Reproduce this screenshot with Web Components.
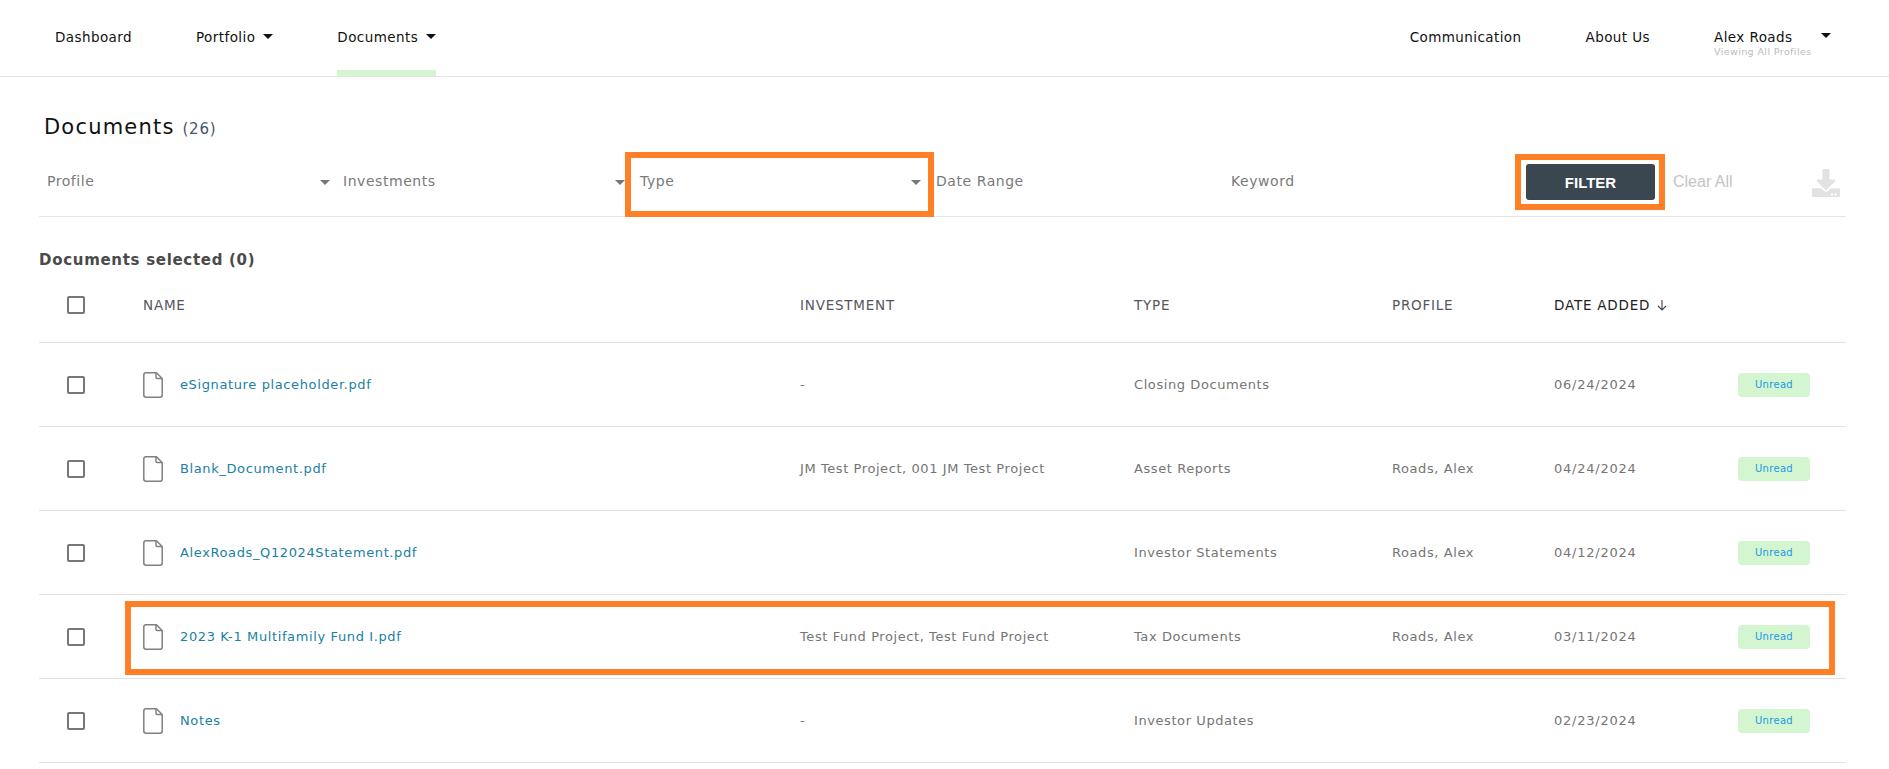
<!DOCTYPE html>
<html lang="en">
<head>
<meta charset="utf-8">
<title>Documents</title>
<style>
  html, body { margin: 0; background: #fff; }
  body { font-family: "DejaVu Sans", Verdana, sans-serif; position: relative; height: 769px; overflow: hidden; }
  main { display: block; padding: 0 43px 0 39px; }
</style>
</head>
<body>
<app-nav>
  <nav-item slot="left" style="margin-right:64px">Dashboard</nav-item>
  <nav-item slot="left" caret style="margin-right:64px">Portfolio</nav-item>
  <nav-item slot="left" caret active>Documents</nav-item>
  <nav-item slot="right" style="margin-right:64px">Communication</nav-item>
  <nav-item slot="right" style="margin-right:64px">About Us</nav-item>
  <user-menu slot="right"></user-menu>
</app-nav>
<main>
  <page-title count="(26)">Documents</page-title>
  <doc-filters>
    <filter-field style="width:296px" caret>Profile</filter-field>
    <filter-field style="width:297px;padding-right:15px" caret>Investments</filter-field>
    <filter-field style="width:296px;padding-right:15px" caret>Type</filter-field>
    <filter-field style="width:295px">Date Range</filter-field>
    <filter-field style="width:295px">Keyword</filter-field>
  </doc-filters>
  <selected-label>Documents selected (0)</selected-label>
  <doc-head></doc-head>
  <doc-row>
    <span slot="name">eSignature placeholder.pdf</span>
    <span slot="investment">-</span>
    <span slot="type">Closing Documents</span>
    <span slot="date">06/24/2024</span>
  </doc-row>
  <doc-row>
    <span slot="name">Blank_Document.pdf</span>
    <span slot="investment">JM Test Project, 001 JM Test Project</span>
    <span slot="type">Asset Reports</span>
    <span slot="profile">Roads, Alex</span>
    <span slot="date">04/24/2024</span>
  </doc-row>
  <doc-row>
    <span slot="name">AlexRoads_Q12024Statement.pdf</span>
    <span slot="type">Investor Statements</span>
    <span slot="profile">Roads, Alex</span>
    <span slot="date">04/12/2024</span>
  </doc-row>
  <doc-row>
    <span slot="name">2023 K-1 Multifamily Fund I.pdf</span>
    <span slot="investment">Test Fund Project, Test Fund Project</span>
    <span slot="type">Tax Documents</span>
    <span slot="profile">Roads, Alex</span>
    <span slot="date">03/11/2024</span>
  </doc-row>
  <doc-row>
    <span slot="name">Notes</span>
    <span slot="investment">-</span>
    <span slot="type">Investor Updates</span>
    <span slot="date">02/23/2024</span>
  </doc-row>
</main>
<!-- orange call-outs drawn over the page -->
<call-out style="left:625px;top:152px;width:309px;height:65px"></call-out>
<call-out style="left:1515px;top:154px;width:150px;height:56px"></call-out>
<call-out style="left:125px;top:601px;width:1710px;height:74px"></call-out>

<script>
const CARET = (color, w, h) => `<svg width="${w}" height="${h}" viewBox="0 0 10 5" style="display:block"><path d="M0 0h10L5 5z" fill="${color}"/></svg>`;

class AppNav extends HTMLElement {
    constructor() {
        super();
        this.attachShadow({ mode: 'open' });
    }

    connectedCallback() {
        this.shadowRoot.innerHTML = `
            <style>
                :host {
                    display: flex;
                    justify-content: space-between;
                    height: 77px;
                    box-sizing: border-box;
                    border-bottom: 1px solid #e4e4e4;
                    padding: 0 58px 0 55px;
                }
                .side { display: flex; align-items: stretch; }
            </style>
            <div class="side"><slot name="left"></slot></div>
            <div class="side"><slot name="right"></slot></div>
        `;
    }
}

class NavItem extends HTMLElement {
    constructor() {
        super();
        this.attachShadow({ mode: 'open' });
    }

    connectedCallback() {
        const caret = this.hasAttribute('caret') ? `<span class="caret">${CARET('#111', 10, 5)}</span>` : '';
        this.shadowRoot.innerHTML = `
            <style>
                :host {
                    display: flex;
                    align-items: flex-start;
                    box-sizing: border-box;
                    height: 76px;
                    padding-top: 29px;
                    font-size: 13.5px;
                    letter-spacing: .42px;
                    line-height: 17px;
                    color: #111;
                    white-space: nowrap;
                }
                :host([active]) { border-bottom: 6px solid #d3f5d0; }
                .caret { margin: 5px 0 0 8px; }
            </style>
            <slot></slot>${caret}
        `;
    }
}

class UserMenu extends HTMLElement {
    constructor() {
        super();
        this.attachShadow({ mode: 'open' });
    }

    connectedCallback() {
        this.shadowRoot.innerHTML = `
            <style>
                :host {
                    display: block;
                    width: 117px;
                    padding-top: 29px;
                    font-size: 13.5px;
                    letter-spacing: .42px;
                    line-height: 17px;
                    color: #111;
                    white-space: nowrap;
                }
                .top { display: flex; justify-content: space-between; }
                .caret { margin-top: 4px; }
                .sub { font-size: 9.500px; letter-spacing: .4px; line-height: 10px; color: #bbb; margin-top: 1px; }
            </style>
            <div class="top"><span>Alex Roads</span><span class="caret">${CARET('#111', 10, 5)}</span></div>
            <div class="sub">Viewing All Profiles</div>
        `;
    }
}

class PageTitle extends HTMLElement {
    constructor() {
        super();
        this.attachShadow({ mode: 'open' });
    }

    connectedCallback() {
        this.shadowRoot.innerHTML = `
            <style>
                :host {
                    display: block;
                    box-sizing: border-box;
                    padding: 36px 0 0 5px;
                    height: 83px;
                    font-size: 21px;
                    letter-spacing: 1.2px;
                    line-height: 28px;
                    color: #111;
                }
                small { font-size: 15px; letter-spacing: .8px; color: #44576a; }
            </style>
            <slot></slot> <small>${this.getAttribute('count')}</small>
        `;
    }
}

class DocFilters extends HTMLElement {
    constructor() {
        super();
        this.attachShadow({ mode: 'open' });
    }

    connectedCallback() {
        this.shadowRoot.innerHTML = `
            <style>
                :host {
                    display: flex;
                    height: 57px;
                    box-sizing: border-box;
                    border-bottom: 1px solid #e4e4e4;
                    padding: 0 0 0 8px;
                }
                .actions { display: flex; align-items: flex-start; padding-top: 4px; }
                button {
                    width: 129px;
                    height: 36px;
                    background: #3a4750;
                    color: #fff;
                    border: 0;
                    border-radius: 3px;
                    font: bold 15px "Liberation Sans", Arial, sans-serif;
                }
                .clear {
                    font: 16px/36px "Liberation Sans", Arial, sans-serif;
                    color: #c4c4c4;
                    margin-left: 18px;
                    width: 139px;
                }
                svg { margin-top: 5px; }
            </style>
            <slot></slot>
            <div class="actions">
                <button>FILTER</button>
                <span class="clear">Clear All</span>
                <svg width="28" height="28" viewBox="0 0 512 512"><path fill="#e2e2e2" d="M216 0h80c13.300 0 24 10.700 24 24v168h87.700c17.800 0 26.700 21.500 14.100 34.100L269.700 378.300c-7.500 7.500-19.800 7.500-27.300 0L90.100 226.100c-12.600-12.600-3.700-34.100 14.100-34.100H192V24c0-13.300 10.700-24 24-24zm296 376v112c0 13.300-10.700 24-24 24H24c-13.300 0-24-10.700-24-24V376c0-13.300 10.700-24 24-24h146.700l49 49c20.100 20.100 52.500 20.100 72.600 0l49-49H488c13.300 0 24 10.700 24 24zm-124 88c0-11-9-20-20-20s-20 9-20 20 9 20 20 20 20-9 20-20zm64 0c0-11-9-20-20-20s-20 9-20 20 9 20 20 20 20-9 20-20z"/></svg>
            </div>
        `;
    }
}

class FilterField extends HTMLElement {
    constructor() {
        super();
        this.attachShadow({ mode: 'open' });
    }

    connectedCallback() {
        const caret = this.hasAttribute('caret') ? `<span class="caret">${CARET('#777', 10, 5)}</span>` : '';
        this.shadowRoot.innerHTML = `
            <style>
                :host {
                    display: flex;
                    justify-content: space-between;
                    align-items: flex-start;
                    box-sizing: border-box;
                    padding: 13px 13px 0 0;
                    font-size: 14px;
                    letter-spacing: .55px;
                    line-height: 17px;
                    color: #7a7a7a;
                    white-space: nowrap;
                }
                .caret { margin-top: 7px; }
            </style>
            <slot></slot>${caret}
        `;
    }
}

class SelectedLabel extends HTMLElement {
    constructor() {
        super();
        this.attachShadow({ mode: 'open' });
    }

    connectedCallback() {
        this.shadowRoot.innerHTML = `
            <style>
                :host {
                    display: block;
                    height: 51px;
                    padding-top: 34px;
                    box-sizing: border-box;
                    font-size: 15px;
                    letter-spacing: .7px;
                    font-weight: bold;
                    line-height: 18px;
                    color: #4a4a4a;
                }
            </style>
            <slot></slot>
        `;
    }
}

const GRID = `
    :host {
        display: grid;
        grid-template-columns: 104px 657px 334px 258px 162px 184px 108px;
        align-items: center;
        box-sizing: border-box;
        border-bottom: 1px solid #e2e2e2;
        font-size: 13px;
        letter-spacing: .58px;
        white-space: nowrap;
    }
    .box {
        display: block;
        width: 18px;
        height: 18px;
        box-sizing: border-box;
        margin-left: 28px;
        border: 2px solid #777;
        border-radius: 2px;
    }
`;

class DocHead extends HTMLElement {
    constructor() {
        super();
        this.attachShadow({ mode: 'open' });
    }

    connectedCallback() {
        this.shadowRoot.innerHTML = `
            <style>
                ${GRID}
                :host { height: 75px; color: #55555f; font-size: 13.5px; letter-spacing: .78px; }
                .sort { color: #222; display: flex; align-items: center; gap: 6px; }
            </style>
            <span class="box"></span>
            <span>NAME</span>
            <span>INVESTMENT</span>
            <span>TYPE</span>
            <span>PROFILE</span>
            <span class="sort">DATE ADDED
                <svg width="12" height="12" viewBox="0 0 12 12" fill="none" stroke="#444" stroke-width="1.100"><path d="M6 1v10M2 7l4 4 4-4"/></svg>
            </span>
        `;
    }
}

class DocRow extends HTMLElement {
    constructor() {
        super();
        this.attachShadow({ mode: 'open' });
    }

    connectedCallback() {
        this.shadowRoot.innerHTML = `
            <style>
                ${GRID}
                :host { height: 84px; color: #757575; }
                .name {
                    display: flex;
                    align-items: center;
                    gap: 17px;
                    color: #1a7fa6;
                    letter-spacing: .62px;
                }
                .date { letter-spacing: .76px; }
                svg { display: block; }
            </style>
            <span class="box"></span>
            <span class="name">
                <svg width="20" height="26" viewBox="0 0 20 26" fill="none" stroke="#808080" stroke-width="1.500" stroke-linejoin="round">
                    <path d="M3 .8h10.500l5.700 5.700V23a2.200 2.200 0 0 1-2.200 2.200H3A2.200 2.200 0 0 1 .8 23V3A2.200 2.200 0 0 1 3 .8z"/>
                    <path d="M13 1v4.500a1 1 0 0 0 1 1h5"/>
                </svg>
                <slot name="name"></slot>
            </span>
            <span><slot name="investment"></slot></span>
            <span><slot name="type"></slot></span>
            <span><slot name="profile"></slot></span>
            <span class="date"><slot name="date"></slot></span>
            <unread-badge>Unread</unread-badge>
        `;
    }
}

class UnreadBadge extends HTMLElement {
    constructor() {
        super();
        this.attachShadow({ mode: 'open' });
    }

    connectedCallback() {
        this.shadowRoot.innerHTML = `
            <style>
                :host {
                    display: block;
                    width: 72px;
                    height: 24px;
                    background: #d3f6d0;
                    border-radius: 4px;
                    color: #1c97ea;
                    font-size: 10px;
                    letter-spacing: .3px;
                    line-height: 23px;
                    text-align: center;
                }
            </style>
            <slot></slot>
        `;
    }
}

class CallOut extends HTMLElement {
    constructor() {
        super();
        this.attachShadow({ mode: 'open' });
    }

    connectedCallback() {
        this.shadowRoot.innerHTML = `
            <style>
                :host {
                    display: block;
                    position: absolute;
                    box-sizing: border-box;
                    border: 6px solid #ff7f27;
                    pointer-events: none;
                }
            </style>
        `;
    }
}

customElements.define('app-nav', AppNav);
customElements.define('nav-item', NavItem);
customElements.define('user-menu', UserMenu);
customElements.define('page-title', PageTitle);
customElements.define('doc-filters', DocFilters);
customElements.define('filter-field', FilterField);
customElements.define('selected-label', SelectedLabel);
customElements.define('doc-head', DocHead);
customElements.define('doc-row', DocRow);
customElements.define('unread-badge', UnreadBadge);
customElements.define('call-out', CallOut);
</script>
</body>
</html>
